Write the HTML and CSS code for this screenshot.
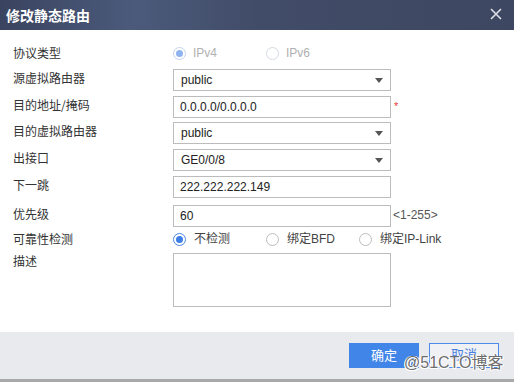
FILE: index.html
```html
<!DOCTYPE html>
<html>
<head>
<meta charset="utf-8">
<link rel="stylesheet" href="styles.css">
</head>
<body>
<div class="dialog">
  <div class="header">
    <span class="title">修改静态路由</span>
    <svg class="close" width="12" height="12" viewBox="0 0 12 12"><path d="M1 1 L11 11 M11 1 L1 11" stroke="#dcdfe6" stroke-width="1.6" fill="none"/></svg>
  </div>
  <div class="content">
    <div class="row r-radio r1">
      <div class="label">协议类型</div>
      <div class="radios">
        <div class="opt disabled"><span class="radio on"></span><span class="otext">IPv4</span></div>
        <div class="opt disabled"><span class="radio"></span><span class="otext">IPv6</span></div>
      </div>
    </div>
    <div class="row r2">
      <div class="label">源虚拟路由器</div>
      <div class="select"><span>public</span><span class="arrow"></span></div>
    </div>
    <div class="row r3">
      <div class="label">目的地址/掩码</div>
      <div class="input">0.0.0.0/0.0.0.0</div>
      <span class="req">*</span>
    </div>
    <div class="row r4">
      <div class="label">目的虚拟路由器</div>
      <div class="select"><span>public</span><span class="arrow"></span></div>
    </div>
    <div class="row r5">
      <div class="label">出接口</div>
      <div class="select"><span>GE0/0/8</span><span class="arrow"></span></div>
    </div>
    <div class="row r6">
      <div class="label">下一跳</div>
      <div class="input">222.222.222.149</div>
    </div>
    <div class="row r7">
      <div class="label">优先级</div>
      <div class="input">60</div>
      <span class="hint">&lt;1-255&gt;</span>
    </div>
    <div class="row r-radio r8">
      <div class="label">可靠性检测</div>
      <div class="radios">
        <div class="opt"><span class="radio on"></span><span class="otext">不检测</span></div>
        <div class="opt"><span class="radio"></span><span class="otext">绑定BFD</span></div>
        <div class="opt"><span class="radio"></span><span class="otext">绑定IP-Link</span></div>
      </div>
    </div>
    <div class="row r9">
      <div class="label lab-ta">描述</div>
      <div class="textarea"></div>
    </div>
  </div>
  <div class="footer">
    <button class="btn primary">确定</button>
    <button class="btn secondary">取消</button>
    <span class="watermark">@51CTO博客</span>
  </div>
</div>
</body>
</html>
```

FILE: styles.css
```css
html, body {
  margin: 0;
  padding: 0;
  width: 514px;
  height: 382px;
  overflow: hidden;
  background: #ffffff;
}
.dialog {
  width: 514px;
  height: 382px;
  display: flex;
  flex-direction: column;
  font-family: "Liberation Sans", "Noto Sans CJK SC", sans-serif;
  font-size: 12px;
  color: #333;
  box-sizing: border-box;
  border-bottom: 3px solid #a9a9a9;
}
.header {
  height: 30px;
  flex: none;
  display: flex;
  align-items: center;
  justify-content: space-between;
  padding: 0 12px 0 6px;
  background: linear-gradient(90deg, #3a4460 0%, #4b5a7b 26%, #414c68 50%, #3d4761 100%);
}
.title {
  color: #ffffff;
  font-size: 14px;
  font-weight: bold;
  font-family: "Noto Sans CJK SC", sans-serif;
  line-height: 30px;
}
.close {
  display: block;
  margin-top: -2px;
}
.content {
  flex: 1;
  padding: 13px 0 0 13px;
  background: #fff;
}
.row {
  display: flex;
  align-items: flex-start;
}
.label {
  width: 160px;
  flex: none;
  line-height: 18px;
  color: #333;
  font-family: "Noto Sans CJK SC", sans-serif;
  font-size: 12px;
}
.r-radio { height: 20px; align-items: center; }
.r-radio .label { line-height: 20px; }
.r1 { margin-bottom: 6px; }
.r2 { margin-bottom: 5px; }
.r3 { margin-bottom: 4px; }
.r4 { margin-bottom: 5px; }
.r5 { margin-bottom: 5px; }
.r6 { margin-bottom: 7px; }
.r7 { margin-bottom: 2px; }
.r8 { margin-bottom: 4px; }
.select, .input, .textarea {
  width: 218px;
  height: 22px;
  box-sizing: border-box;
  border: 1px solid #bcbcbc;
  background: #fff;
  color: #222;
  line-height: 20px;
  font-size: 12px;
}
.select {
  display: flex;
  justify-content: space-between;
  align-items: center;
  padding: 0 7px 0 7px;
}
.input {
  padding: 0 6px;
}
.arrow {
  width: 0;
  height: 0;
  border-left: 4px solid transparent;
  border-right: 4px solid transparent;
  border-top: 5px solid #555;
}
.textarea {
  height: 54px;
}
.lab-ta { line-height: 16px; }
.req {
  color: #e4393c;
  font-size: 11px;
  margin-left: 3px;
  line-height: 12px;
  margin-top: 4px;
}
.hint {
  color: #555;
  margin-left: 2px;
  line-height: 20px;
}
.radios {
  display: flex;
  align-items: center;
}
.opt {
  width: 93px;
  display: flex;
  align-items: center;
  flex: none;
}
.opt:last-child { width: auto; }
.radio {
  width: 13px;
  height: 13px;
  box-sizing: border-box;
  border: 1px solid #bdbdbd;
  border-radius: 50%;
  display: flex;
  align-items: center;
  justify-content: center;
  flex: none;
  background: #fff;
}
.radio.on { border-color: #4a86e8; }
.radio.on::after {
  content: "";
  width: 7px;
  height: 7px;
  border-radius: 50%;
  background: #3d7fe6;
}
.disabled .radio { border-color: #d4dae6; }
.disabled .radio.on { border-color: #c4d3ef; }
.disabled .radio.on::after { background: #8fb3ee; }
.otext {
  margin-left: 8px;
  color: #444;
  line-height: 20px;
}
.disabled .otext { color: #b0b0b0; margin-left: 7px; }
.footer {
  height: 47px;
  flex: none;
  background: #e9eaee;
  display: flex;
  align-items: center;
  justify-content: flex-end;
  padding-right: 15px;
  padding-bottom: 1px;
  box-sizing: border-box;
  position: relative;
}
.btn {
  width: 70px;
  height: 25px;
  box-sizing: border-box;
  font-family: "Noto Sans CJK SC", sans-serif;
  font-size: 13px;
  padding: 0 0 3px 0;
  margin-left: 10px;
  border-radius: 0;
  line-height: 20px;
  cursor: pointer;
}
.primary {
  background: #4285e8;
  border: 1px solid #4285e8;
  color: #fff;
  padding: 0;
}
.secondary {
  background: #f0f1f4;
  border: 1px solid #4a8be8;
  color: #4a7fe0;
}
.watermark {
  position: absolute;
  left: 404px;
  top: 21px;
  font-family: "Liberation Sans", "Noto Sans CJK SC", sans-serif;
  font-size: 16px;
  color: #6e6e6e;
  text-shadow: 1px 1px 0 #fff, -1px 1px 0 #fff, 1px 0 0 #fff, -1px 0 0 #fff;
  line-height: 20px;
}
```
